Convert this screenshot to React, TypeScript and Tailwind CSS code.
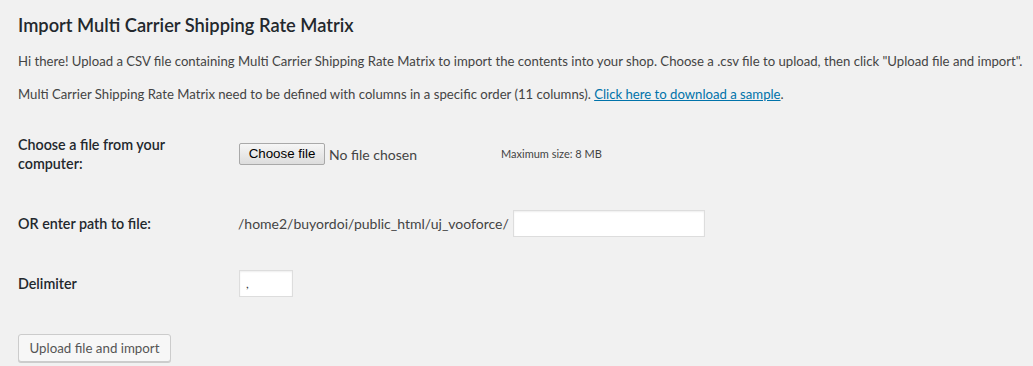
export default function App() {
  const font = { fontFamily: 'Lato, "Noto Sans", sans-serif' };
  return (
    <div className="h-[366px] w-full overflow-hidden bg-[#f1f1f1] text-[13.15px] text-[#444]" style={font}>
      <div className="px-[18px] pt-[12px]">
        <h2 className="text-[18.3px] font-semibold leading-[26px] text-[#23282d]">
          Import Multi Carrier Shipping Rate Matrix
        </h2>
        <p className="mt-[13px] whitespace-nowrap leading-[20px]">
          Hi there! Upload a CSV file containing Multi Carrier Shipping Rate Matrix to import the contents into your shop. Choose a .csv file to upload, then click "Upload file and import".
        </p>
        <p className="mt-[13px] leading-[20px]">
          Multi Carrier Shipping Rate Matrix need to be defined with columns in a specific order (11 columns).{' '}
          <a href="#" className="text-[#0073aa] underline">Click here to download a sample</a>.
        </p>

        <div className="mt-[31px] flex items-start">
          <div className="w-[221px] pr-[10px] text-[14.3px] font-semibold leading-[19px] text-[#23282d]">
            Choose a file from your computer:
          </div>
          <div className="flex items-center pt-[8px]">
            <span
              className="inline-flex h-[22px] w-[86px] items-center justify-center rounded-[2px] border border-[#a9a9a9] bg-gradient-to-b from-[#f6f6f6] to-[#dddddd] text-[13.33px] text-black"
              style={{ fontFamily: '"Liberation Sans", Arial, sans-serif' }}
            >
              Choose file
            </span>
            <span className="ml-[4px] text-[14px] text-[#444]">No file chosen</span>
            <span className="ml-[84px] text-[11px] text-[#444]">Maximum size: 8 MB</span>
          </div>
        </div>

        <div className="mt-[37px] flex items-center">
          <div className="w-[220px] pr-[10px] text-[14.3px] font-semibold leading-[19px] text-[#23282d]">
            OR enter path to file:
          </div>
          <span className="text-[14px] text-[#444]">/home2/buyordoi/public_html/uj_vooforce/</span>
          <input className="ml-[4px] h-[27px] w-[192px] border border-[#ddd] bg-white shadow-[inset_0_1px_2px_rgba(0,0,0,0.07)] outline-none" />
        </div>

        <div className="mt-[33px] flex items-center">
          <div className="w-[221px] pr-[10px] text-[14.3px] font-semibold leading-[19px] text-[#23282d]">
            Delimiter
          </div>
          <input
            defaultValue=","
            className="h-[27px] w-[54px] border border-[#ddd] bg-white px-[6px] text-[12px] text-[#32373c] shadow-[inset_0_1px_2px_rgba(0,0,0,0.07)] outline-none"
          />
        </div>

        <button className="mt-[37px] h-[28px] w-[153px] rounded-[3px] border border-[#ccc] bg-[#f7f7f7] text-[13.3px] leading-[26px] text-[#555] shadow-[0_1px_0_#ccc]">
          Upload file and import
        </button>
      </div>
    </div>
  );
}
